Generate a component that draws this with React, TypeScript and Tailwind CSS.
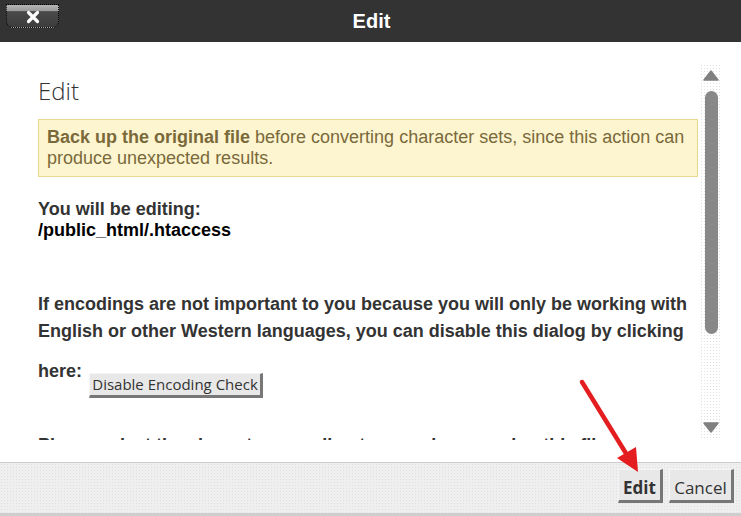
import React from "react";

const dots =
  "bg-[radial-gradient(circle,#e0e0e0_0.6px,transparent_0.8px)] bg-[length:3px_3px]";

function Bevel({
  children,
  className,
}: {
  children: React.ReactNode;
  className: string;
}) {
  return (
    <div
      className={
        "border-t border-l border-t-[#f4f4f4] border-l-[#f4f4f4] border-r-[3px] border-b-[3px] border-r-[#777] border-b-[#777] bg-[#e8e8e8] text-[#333] text-center whitespace-nowrap " +
        className
      }
      style={{ fontFamily: '"Open Sans", sans-serif' }}
    >
      {children}
    </div>
  );
}

export default function App() {
  return (
    <div
      className="relative w-[741px] h-[516px] overflow-hidden bg-white flex flex-col"
      style={{ fontFamily: '"Liberation Sans", Arial, sans-serif' }}
    >
      {/* Header */}
      <div className="h-[42px] shrink-0 bg-[#333] grid grid-cols-[1fr_auto_1fr]">
        <div className="pl-[6px] pt-[4px]">
          <div className="w-[53px] h-[24px] rounded-b-[7px] border border-dotted border-black bg-[linear-gradient(#b4b4b4_0,#9c9c9c_26%,#4a4a4a_30%,#3c3c3c_100%)] flex items-center justify-center">
            <svg width="14" height="14" viewBox="0 0 14 14" className="mt-[2px]">
              <path
                d="M2.5 2.5 L11.5 11.5 M11.5 2.5 L2.5 11.5"
                stroke="#fff"
                strokeWidth="3.2"
                strokeLinecap="round"
              />
            </svg>
          </div>
        </div>
        <div className="text-white font-bold text-[20px] leading-[42px] pl-[2px]">
          Edit
        </div>
        <div />
      </div>

      {/* Main */}
      <div className="h-[420px] shrink-0 pt-[22px] pb-[22px] pl-[38px] flex">
        <div className="w-[660px] h-[376px] overflow-hidden">
          <h1
            className="mt-[13px] text-[24px] leading-[28px] font-light text-[#333]"
            style={{ fontFamily: '"Open Sans", sans-serif' }}
          >
            Edit
          </h1>
          <div className="mt-[14px] border border-[#e4d98c] bg-[#fdf5d0] px-[8px] py-[7px] text-[18px] leading-[21px] text-[#7a693a]">
            <b>Back up the original file</b> before converting character sets,
            since this action can
            <br />
            produce unexpected results.
          </div>
          <div className="mt-[22px] text-[18px] leading-[21px] font-bold">
            <div className="text-[#333]">You will be editing:</div>
            <div className="text-black">/public_html/.htaccess</div>
          </div>
          <div className="mt-[50px] text-[18px] leading-[27px] font-bold text-[#333] whitespace-nowrap">
            If encodings are not important to you because you will only be
            working with
            <br />
            English or other Western languages, you can disable this dialog by
            clicking
          </div>
          <div className="mt-[13px] flex items-start">
            <span className="text-[18px] leading-[27px] font-bold text-[#333]">
              here:
            </span>
            <Bevel className="ml-[7px] mt-[15px] h-[25px] w-[174px] text-[15px] leading-[21px]">
              Disable Encoding Check
            </Bevel>
          </div>
          <div className="mt-[34px] text-[18px] leading-[27px] font-bold text-[#333] whitespace-nowrap">
            Please select the character encoding to use when opening this file:
          </div>
        </div>

        {/* Scrollbar */}
        <div className={"ml-[2px] w-[22px] h-[376px] flex flex-col items-center " + dots}>
          <svg width="16" height="11" viewBox="0 0 16 11" className="mt-[6px]">
            <path
              d="M8 1 L15 10 L1 10 Z"
              fill="#808080"
              stroke="#808080"
              strokeWidth="1.5"
              strokeLinejoin="round"
            />
          </svg>
          <div className="mt-[10px] w-[13px] h-[243px] rounded-full bg-[#888]" />
          <div className="flex-1" />
          <svg width="16" height="11" viewBox="0 0 16 11" className="mb-[7px]">
            <path
              d="M1 1 L15 1 L8 10 Z"
              fill="#808080"
              stroke="#808080"
              strokeWidth="1.5"
              strokeLinejoin="round"
            />
          </svg>
        </div>
      </div>

      {/* Footer */}
      <div
        className={
          "h-[51px] shrink-0 border-t border-[#cccccc] bg-[#efefef] flex justify-end items-start gap-[6px] pt-[6px] pr-[7px] " +
          dots
        }
      >
        <Bevel className="w-[45px] h-[34px] pt-[6px] text-[17px] leading-[24px] font-bold">
          Edit
        </Bevel>
        <Bevel className="w-[65px] h-[34px] pt-[6px] text-[17px] leading-[24px]">
          Cancel
        </Bevel>
      </div>
      <div className="h-[3px] shrink-0 bg-[#cecece]" />
      <div className="flex-1 bg-white" />

      {/* Red annotation arrow */}
      <svg
        className="absolute left-0 top-0 pointer-events-none"
        width="741"
        height="516"
        viewBox="0 0 741 516"
      >
        <line
          x1="582"
          y1="382"
          x2="627"
          y2="455"
          stroke="#e41e20"
          strokeWidth="4.5"
          strokeLinecap="round"
        />
        <polygon points="638,472 617,458 636,447" fill="#e41e20" />
      </svg>
    </div>
  );
}
